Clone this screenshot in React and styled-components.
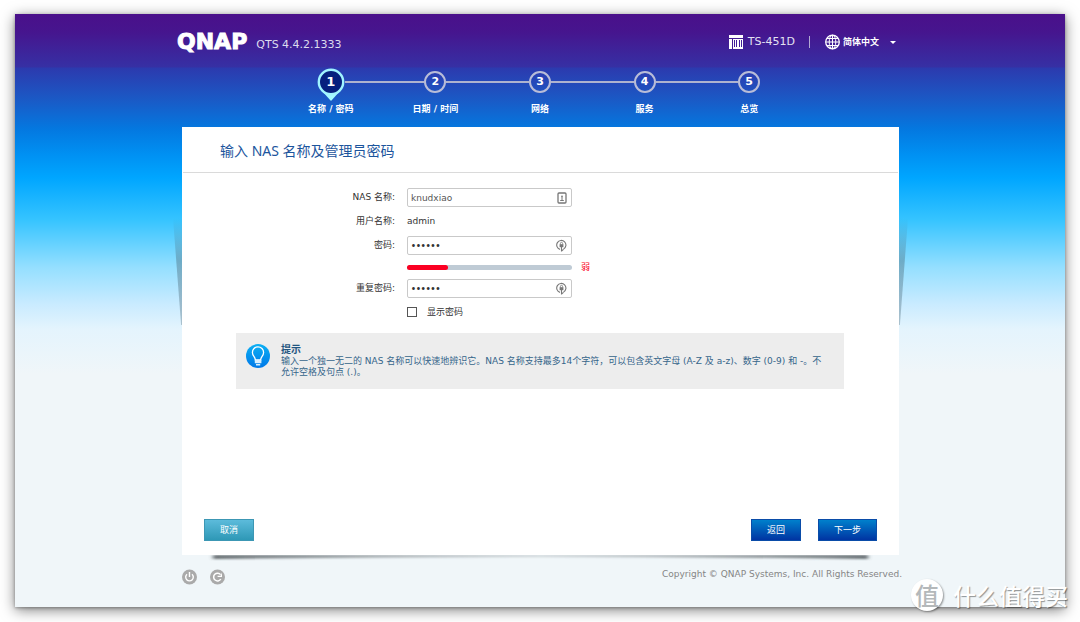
import React, { useState } from "react";
import styled, { createGlobalStyle, css } from "styled-components";

const cjk = `"Noto Sans CJK SC", sans-serif`;
const verdana = `"DejaVu Sans", ${cjk}`;

const GlobalStyle = createGlobalStyle`
  *, *::before, *::after { box-sizing: border-box; }
  body {
    margin: 0;
    background: #fff;
    color: #333;
    font: 9px/12px ${verdana};
  }
  button, input, select { font: inherit; margin: 0; }
`;

const Page = styled.div`
  position: relative;
  display: flex;
  min-height: 100vh;
  padding: 14px 15px 15px;
  overflow: hidden;
`;

const Screen = styled.div`
  flex: 1;
  display: flex;
  flex-direction: column;
  align-items: center;
  box-shadow: 0 3px 13px rgba(0, 0, 0, 0.5), 0 1px 3px rgba(0, 0, 0, 0.3);
  background: #f0f6f9 linear-gradient(
    #4a108a 0,
    #46158e 18px,
    #3630a4 53px,
    #2c3aae 54px,
    #1a5ac6 86px,
    #0478e0 115px,
    #0090f2 140px,
    #00a6ff 164px,
    #36c4ff 206px,
    #94dfff 253px,
    #c9ebff 290px,
    #e4f4fd 315px,
    #f0f6f9 360px
  ) no-repeat;
`;

const Container = styled.div`
  flex: 1;
  display: flex;
  flex-direction: column;
  width: 100%;
  max-width: 726px;
`;

const Header = styled.header`
  display: flex;
  align-items: center;
  height: 54px;
  padding-top: 2px;
  color: #fff;
`;

const Brand = styled.div`
  font: bold 22px/22px "DejaVu Sans", sans-serif;
  -webkit-text-stroke: 1px #fff;
`;

const Version = styled.span`
  flex: 1;
  padding: 6px 0 0 9px;
  color: #dcdcee;
  font-size: 11px;
`;

const Tools = styled.div`
  display: flex;
  align-items: center;
  height: 16px;
  svg { display: block; }
`;

const Model = styled.span`
  margin: 0 14px 0 4px;
  color: #e4e2f2;
  font-size: 11px;
`;

const Divider = styled.span`
  width: 1px;
  height: 12px;
  margin-right: 15px;
  background: #b3aad3;
`;

const Language = styled.label`
  position: relative;
  display: flex;
  align-items: center;
  gap: 3px;
`;

const LanguageSelect = styled.select`
  appearance: none;
  width: 60px;
  padding: 0;
  border: 0;
  background: none;
  color: #fff;
  font-weight: bold;
  option { color: #333; }
`;

const Caret = styled.span`
  position: absolute;
  right: 7px;
  top: 7px;
  border: 3px solid transparent;
  border-top-color: #fff;
  border-bottom: 0;
  pointer-events: none;
`;

const Stepper = styled.ol`
  display: flex;
  align-self: center;
  width: 100%;
  max-width: 523px;
  margin: 0;
  padding: 0 0 12px;
  list-style: none;
  color: #fff;
  font-weight: bold;
  text-align: center;
`;

const Step = styled.li`
  flex: 1;
`;

const Track = styled.div`
  display: flex;
  align-items: center;
  height: 28px;
  margin-bottom: 7px;
`;

const Line = styled.span`
  flex: 1;
  height: 2px;
  background: ${(p) => (p.$hidden ? "transparent" : "#aeb3cf")};
`;

const Marker = styled.span`
  position: relative;
  display: flex;
  align-items: center;
  justify-content: center;
  width: 22px;
  height: 22px;
  border: 2px solid #b9bdd8;
  border-radius: 50%;
  font-size: 11px;
  ${(p) =>
    p.$active &&
    css`
      width: 28px;
      height: 28px;
      border: 0;
      font-size: 13px;
      svg { position: absolute; left: 0; top: 0; }
      b { position: relative; }
    `}
`;

const Panel = styled.main`
  position: relative;
  flex: 1;
  display: flex;
  flex-direction: column;
  margin: 0 4px 0 5px;
  background: #fff;
`;

const SideShadow = styled.span`
  position: absolute;
  top: 91px;
  width: 9px;
  height: 107px;
  background: linear-gradient(rgba(70, 100, 115, 0), rgba(70, 100, 115, 0.4) 40%, rgba(90, 120, 135, 0.4));
  ${(p) =>
    p.$side === "left"
      ? css`right: 100%; clip-path: polygon(0 0, 100% 0, 100% 100%, 90% 100%);`
      : css`left: 100%; clip-path: polygon(0 0, 100% 0, 10% 100%, 0 100%);`}
`;

const BottomShadow = styled.svg`
  position: absolute;
  left: 26px;
  top: 100%;
  width: calc(100% - 52px);
  height: 10px;
`;

const Title = styled.h1`
  margin: 0 1px;
  padding: 14px 37px 11px;
  border-bottom: 1px solid #dadada;
  color: #1c559d;
  font: 14px/20px "Noto Sans", ${cjk};
`;

const Form = styled.form`
  flex: 1;
  display: flex;
  flex-direction: column;
`;

const Fields = styled.div`
  display: grid;
  grid-template-columns: 225px 165px 1fr;
  gap: 5px 0;
  padding-top: 15px;
`;

const Label = styled.label`
  padding-right: 12px;
  grid-column: 1;
  line-height: 19px;
  text-align: right;
`;

const Value = styled.output`
  line-height: 19px;
`;

const Field = styled.div`
  display: flex;
  align-items: center;
  height: 19px;
  padding: 0 4px 0 3px;
  border: 1px solid #c9c9c9;
  border-radius: 2px;
  background: #fff;
  svg { flex: none; display: block; }
`;

const TextInput = styled.input`
  flex: 1;
  min-width: 0;
  height: 17px;
  padding: 0;
  border: 0;
  outline: 0;
  background: none;
  color: ${(p) => (p.type === "password" ? "#333" : "#555")};
  ${(p) => p.type === "password" && css`font: 13px/17px "Open Sans", sans-serif;`}
`;

const Strength = styled.div`
  grid-column: 2;
  display: flex;
  align-items: center;
  height: 14px;
`;

const StrengthTrack = styled.div`
  flex: 1;
  height: 5px;
  border-radius: 3px;
  background: #bfcbd5;
`;

const StrengthFill = styled.div`
  height: 5px;
  border-radius: 3px;
  background: #fb0022;
`;

const StrengthText = styled.span`
  padding-left: 9px;
  color: #fb0022;
  line-height: 14px;
`;

const CheckLabel = styled.label`
  grid-column: 2;
  display: flex;
  align-items: center;
  gap: 10px;
  height: 18px;
`;

const Checkbox = styled.input`
  appearance: none;
  width: 10px;
  height: 10px;
  border: 1px solid #555;
  background: #fff;
  &:checked { background: #555; }
`;

const Tip = styled.section`
  display: flex;
  gap: 11px;
  margin: 12px 55px 0 54px;
  padding: 11px 16px 11px 10px;
  background: #ededed;
  color: #35658a;
  svg { flex: none; display: block; }
  h2 { margin: 0; font-size: 10px; line-height: 12px; color: #1f5580; }
  p { margin: 0; line-height: 11px; }
`;

const Actions = styled.div`
  display: flex;
  gap: 17px;
  margin-top: auto;
  padding: 14px 22px;
`;

const Button = styled.button`
  height: 22px;
  padding: 0 15px;
  border: 1px solid ${(p) => (p.$primary ? "#0a4ca8" : "#3c97b4")};
  background: ${(p) =>
    p.$primary ? "linear-gradient(#0080cc, #0034a2)" : "linear-gradient(#5cbbdb, #2e98b6)"};
  color: #fff;
  &:first-child { margin-right: auto; }
`;

const Footer = styled.footer`
  display: flex;
  align-items: flex-start;
  gap: 13px;
  height: 52px;
  padding: 13px 1px 0 5px;
  color: #858585;
`;

const IconButton = styled.button`
  padding: 1px 0 0;
  border: 0;
  background: none;
  svg { display: block; }
`;

const Copyright = styled.small`
  margin-left: auto;
  font-size: 9px;
`;

const Watermark = styled.div`
  position: absolute;
  right: 12px;
  bottom: 10px;
  display: flex;
  align-items: center;
  gap: 10px;
  color: #fff;
  font: 500 23px/34px ${cjk};
  text-shadow: 1px 1px 1px rgba(0, 0, 0, 0.4);
`;

const Seal = styled.span`
  width: 32px;
  height: 32px;
  border-radius: 50%;
  background: #fff;
  box-shadow: 1px 1px 2px rgba(0, 0, 0, 0.4);
  color: #b4b8ba;
  font-size: 24px;
  line-height: 32px;
  text-align: center;
  text-shadow: none;
`;

const NasIcon = () => (
  <svg width="15" height="14" viewBox="0 0 15 14" fill="#fff" aria-hidden="true">
    <path d="M0 0h14v3H0zM0 4h3v10H0zM4 4h10v10H4z" />
    <path d="M5 5h1v7H5zM7 5h1v7H7zM10 5h1v7h-1zM12 5h1v7h-1z" fill="#40209a" />
  </svg>
);

const GlobeIcon = () => (
  <svg width="15" height="16" viewBox="0 0 15 16" fill="none" stroke="#fff" aria-hidden="true">
    <circle cx="7.5" cy="8" r="6.8" strokeWidth="1.3" />
    <ellipse cx="7.5" cy="8" rx="3.3" ry="6.8" />
    <path d="M7.5 1v14M1 8h13M2 4.5h11M2 11.5h11" />
  </svg>
);

const PinShape = () => (
  <svg width="28" height="34" viewBox="0 0 28 34" aria-hidden="true">
    <path d="M5 23 14 33 23 23z" fill="#a4faff" />
    <circle cx="14" cy="14" r="12.2" fill="#06207e" stroke="#a0f4ff" strokeWidth="2.4" />
  </svg>
);

const ContactIcon = () => (
  <svg width="10" height="12" viewBox="0 0 10 12" fill="none" stroke="#777" aria-hidden="true">
    <rect x="1" y="1" width="8" height="10" rx="1" strokeWidth="1.3" />
    <circle cx="5" cy="4.3" r=".9" fill="#777" stroke="none" />
    <path d="M5 5v3M3.2 8.5h3.6" />
  </svg>
);

const LockIcon = () => (
  <svg width="11" height="13" viewBox="0 0 11 13" fill="none" stroke="#777" aria-hidden="true">
    <path d="M4 10.4A4.6 4.6 0 1 1 7.6 10M5.5 8v4.5M5.5 12l2-1.6" strokeWidth="1.1" />
    <rect x="3.6" y="5.2" width="3.8" height="3" fill="#777" stroke="none" />
    <path d="M4.4 5.5V4.4a1.1 1.1 0 0 1 2.2 0v1.1" strokeWidth=".8" />
  </svg>
);

const BulbIcon = () => (
  <svg width="24" height="24" viewBox="0 0 24 24" fill="none" aria-hidden="true">
    <defs>
      <linearGradient id="bulb" x2="0" y2="1">
        <stop stopColor="#0cb0f4" />
        <stop offset="1" stopColor="#0078e8" />
      </linearGradient>
    </defs>
    <circle cx="12" cy="12" r="12" fill="url(#bulb)" />
    <path d="M9.3 15.8c0-3-2.9-3.9-2.9-7.3a5.6 5.6 0 0 1 11.2 0c0 3.4-2.9 4.3-2.9 7.3z" stroke="#fff" strokeWidth="1.3" />
    <path d="M8.8 16h6.6v3.2H8.8zM10 20h4.2v1.6H10z" fill="#d9efff" />
  </svg>
);

const PowerIcon = () => (
  <svg width="15" height="16" viewBox="0 0 15 16" fill="none" aria-hidden="true">
    <circle cx="7.5" cy="8" r="7.5" fill="#aaa" />
    <path d="M5 5.2a3.8 3.8 0 1 0 5 0M7.5 3v5" stroke="#fff" strokeWidth="1.4" />
  </svg>
);

const RestartIcon = () => (
  <svg width="15" height="16" viewBox="0 0 15 16" fill="none" aria-hidden="true">
    <circle cx="7.5" cy="8" r="7.5" fill="#aaa" />
    <path d="M10.8 10.2A3.9 3.9 0 1 1 10.6 5.6" stroke="#fff" strokeWidth="1.5" />
    <path d="M12 3.6V8H7.6V6.8h3z" fill="#fff" />
  </svg>
);

const steps = ["名称 / 密码", "日期 / 时间", "网络", "服务", "总览"];

export default function App() {
  const [visible, setVisible] = useState(false);
  const type = visible ? "text" : "password";
  const strength = 25;

  return (
    <>
      <GlobalStyle />
      <Page lang="zh-CN">
        <Screen>
          <Container>
            <Header>
              <Brand>QNAP</Brand>
              <Version>QTS 4.4.2.1333</Version>
              <Tools>
                <NasIcon />
                <Model>TS-451D</Model>
                <Divider />
                <Language>
                  <GlobeIcon />
                  <LanguageSelect aria-label="语言" defaultValue="zh">
                    <option value="zh">简体中文</option>
                  </LanguageSelect>
                  <Caret />
                </Language>
              </Tools>
            </Header>
            <Stepper>
              {steps.map((name, i) => (
                <Step key={name} aria-current={i === 0 ? "step" : undefined}>
                  <Track>
                    <Line $hidden={i === 0} />
                    <Marker $active={i === 0}>
                      {i === 0 && <PinShape />}
                      <b>{i + 1}</b>
                    </Marker>
                    <Line $hidden={i === steps.length - 1} />
                  </Track>
                  {name}
                </Step>
              ))}
            </Stepper>
            <Panel>
              <SideShadow $side="left" />
              <SideShadow $side="right" />
              <BottomShadow viewBox="0 0 665 10" preserveAspectRatio="none" aria-hidden="true">
                <defs>
                  <linearGradient id="fade">
                    <stop stopColor="#50585c" stopOpacity=".85" />
                    <stop offset=".25" stopColor="#6a7276" stopOpacity=".6" />
                    <stop offset=".5" stopColor="#8a9296" stopOpacity=".35" />
                    <stop offset=".75" stopColor="#6a7276" stopOpacity=".6" />
                    <stop offset="1" stopColor="#50585c" stopOpacity=".85" />
                  </linearGradient>
                  <filter id="soft" x="-2%" y="-50%" width="104%" height="200%">
                    <feGaussianBlur stdDeviation="2 1" />
                  </filter>
                </defs>
                <path d="M5 0H660V4Q332 0 5 4z" fill="url(#fade)" filter="url(#soft)" />
              </BottomShadow>
              <Title>输入 NAS 名称及管理员密码</Title>
              <Form onSubmit={(e) => e.preventDefault()}>
                <Fields>
                  <Label htmlFor="nas">NAS 名称:</Label>
                  <Field>
                    <TextInput id="nas" type="text" defaultValue="knudxiao" />
                    <ContactIcon />
                  </Field>
                  <Label htmlFor="user">用户名称:</Label>
                  <Value id="user">admin</Value>
                  <Label htmlFor="password">密码:</Label>
                  <Field>
                    <TextInput id="password" type={type} defaultValue="123456" />
                    <LockIcon />
                  </Field>
                  <Strength>
                    <StrengthTrack>
                      <StrengthFill style={{ width: `${strength}%` }} />
                    </StrengthTrack>
                  </Strength>
                  <StrengthText>弱</StrengthText>
                  <Label htmlFor="repeat">重复密码:</Label>
                  <Field>
                    <TextInput id="repeat" type={type} defaultValue="123456" />
                    <LockIcon />
                  </Field>
                  <CheckLabel>
                    <Checkbox type="checkbox" checked={visible} onChange={(e) => setVisible(e.target.checked)} />
                    显示密码
                  </CheckLabel>
                </Fields>
                <Tip>
                  <BulbIcon />
                  <div>
                    <h2>提示</h2>
                    <p>
                      输入一个独一无二的 NAS 名称可以快速地辨识它。NAS 名称支持最多14个字符，可以包含英文字母 (A-Z 及 a-z)、数字 (0-9) 和 -。不允许空格及句点 (.)。
                    </p>
                  </div>
                </Tip>
                <Actions>
                  <Button type="button">取消</Button>
                  <Button type="button" $primary>返回</Button>
                  <Button type="submit" $primary>下一步</Button>
                </Actions>
              </Form>
            </Panel>
            <Footer>
              <IconButton type="button" aria-label="关机"><PowerIcon /></IconButton>
              <IconButton type="button" aria-label="重启"><RestartIcon /></IconButton>
              <Copyright>Copyright © QNAP Systems, Inc. All Rights Reserved.</Copyright>
            </Footer>
          </Container>
        </Screen>
        <Watermark>
          <Seal>值</Seal>
          什么值得买
        </Watermark>
      </Page>
    </>
  );
}
